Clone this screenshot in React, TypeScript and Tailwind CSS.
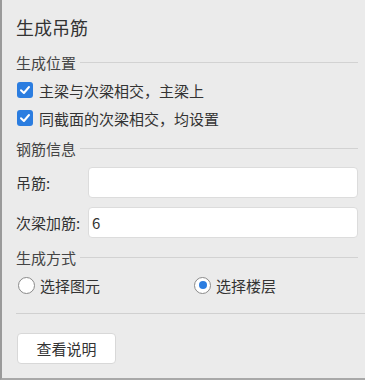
import React, { useState } from 'react';

const font = { fontFamily: '"Noto Sans CJK SC", "Noto Sans", sans-serif' };

function SectionHeader({ title }: { title: string }) {
    return (
        <div className="flex items-center gap-[4px] h-[20px]">
            <span className="text-[15px] text-[#444] leading-none">{title}</span>
            <div className="flex-1 h-px bg-[#d2d2d2]" />
        </div>
    );
}

function Check({ label, checked, onToggle }: { label: string; checked: boolean; onToggle: () => void }) {
    return (
        <label className="flex items-center gap-[6px] h-[28px] cursor-pointer" onClick={onToggle}>
            <span className={`w-[16px] h-[16px] rounded-[3px] flex items-center justify-center ${checked ? 'bg-[#2b7de0]' : 'bg-white border border-[#999]'}`}>
                {checked && (
                    <svg width="12" height="12" viewBox="0 0 12 12">
                        <path d="M2 6.3 L4.9 9 L10 3" fill="none" stroke="white" strokeWidth="2" strokeLinecap="round" strokeLinejoin="round" />
                    </svg>
                )}
            </span>
            <span className="text-[15px] text-[#333] leading-none">{label}</span>
        </label>
    );
}

function Radio({ label, checked, onSelect }: { label: string; checked: boolean; onSelect: () => void }) {
    return (
        <label className="flex items-center gap-[5px] cursor-pointer" onClick={onSelect}>
            <span className="w-[17px] h-[17px] rounded-full bg-white border border-[#8a8a8a] flex items-center justify-center">
                {checked && <span className="w-[8px] h-[8px] rounded-full bg-[#2b7de0]" />}
            </span>
            <span className="text-[15px] text-[#333] leading-none">{label}</span>
        </label>
    );
}

export default function App() {
    const [c1, setC1] = useState(true);
    const [c2, setC2] = useState(true);
    const [mode, setMode] = useState<'elem' | 'floor'>('floor');
    const [hang, setHang] = useState('');
    const [extra, setExtra] = useState('6');

    return (
        <div style={font} className="w-[365px] h-[380px] bg-[#ebebeb] border-l-2 border-b-2 border-l-[#9a9a9a] border-b-[#a8a8a8] flex flex-col select-none">
            <div className="pl-[14px] pr-[7px] flex flex-col">
                <h1 className="text-[18px] h-[18px] text-[#333] leading-[18px] mt-[18px]">生成吊筋</h1>

                <div className="mt-[16px]">
                    <SectionHeader title="生成位置" />
                </div>
                <div className="flex flex-col mt-[4px] pl-[1px]">
                    <Check label="主梁与次梁相交，主梁上" checked={c1} onToggle={() => setC1(!c1)} />
                    <Check label="同截面的次梁相交，均设置" checked={c2} onToggle={() => setC2(!c2)} />
                </div>

                <div className="mt-[6px]">
                    <SectionHeader title="钢筋信息" />
                </div>
                <div className="flex flex-col gap-[9px] mt-[9px]">
                    <div className="flex items-center">
                        <span className="w-[72px] text-[15px] text-[#333] leading-none">吊筋:</span>
                        <input
                            value={hang}
                            onChange={e => setHang(e.target.value)}
                            className="flex-1 h-[31px] bg-white border border-[#dcdcdc] rounded-[4px] px-[3px] text-[15px] text-[#333] outline-none"
                        />
                    </div>
                    <div className="flex items-center">
                        <span className="w-[72px] text-[15px] text-[#333] leading-none">次梁加筋:</span>
                        <input
                            value={extra}
                            onChange={e => setExtra(e.target.value)}
                            className="flex-1 h-[31px] bg-white border border-[#dcdcdc] rounded-[4px] px-[3px] text-[15px] text-[#333] outline-none"
                        />
                    </div>
                </div>

                <div className="mt-[9px]">
                    <SectionHeader title="生成方式" />
                </div>
                <div className="flex items-center mt-[8px] h-[20px] pl-[2px]">
                    <div className="w-[176px]">
                        <Radio label="选择图元" checked={mode === 'elem'} onSelect={() => setMode('elem')} />
                    </div>
                    <Radio label="选择楼层" checked={mode === 'floor'} onSelect={() => setMode('floor')} />
                </div>
            </div>

            <div className="ml-[14px] mt-[18px] h-px bg-[#d0d0d0]" />

            <div className="pl-[15px] mt-[19px]">
                <button className="w-[99px] h-[31px] bg-white border border-[#d8d8d8] rounded-[4px] text-[15px] leading-none text-[#333]">
                    查看说明
                </button>
            </div>
        </div>
    );
}
